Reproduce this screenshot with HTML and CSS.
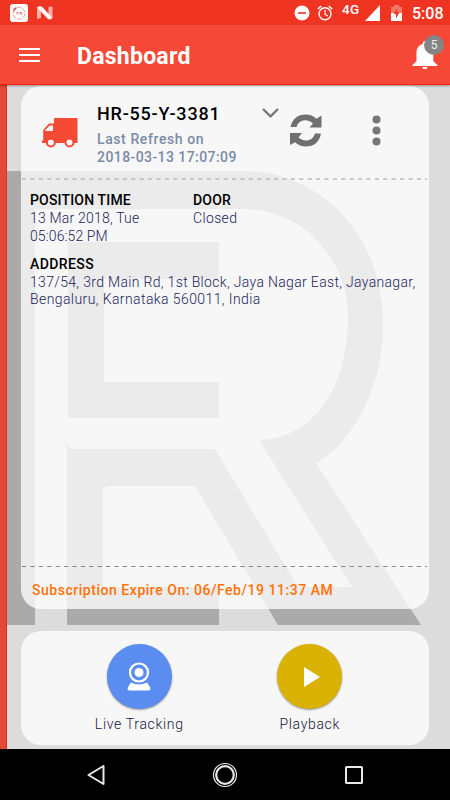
FILE: index.html
```html
<!DOCTYPE html>
<html lang="en">
<head>
<meta charset="utf-8">
<title>Dashboard</title>
<link rel="stylesheet" href="styles.css">
</head>
<body>
<div class="phone">
  <div class="status">
    <svg class="s-app" width="18" height="18" viewBox="0 0 18 18"><rect width="18" height="18" rx="3" fill="#fff"/><circle cx="9" cy="9.3" r="5.9" fill="none" stroke="#eba098" stroke-width="1" stroke-dasharray="5 1"/><path d="M3.500 6.500 6 3.800" stroke="#d33" stroke-width="1.300"/><path d="M7 10.500V8.500h1.800M10 10.500V8.500h1.600v2" stroke="#d66" stroke-width=".9" fill="none"/></svg>
    <svg class="s-n" width="16" height="14" viewBox="0 0 16 14"><path d="M0 1.500 4 4.500V12L0 13zM11.500 1 15.500 .5V12l-4-3z" fill="#ffb0a8"/><path d="M0 1.500Q2.500-.7 5 .8L15.500 12Q13 14.500 10.500 12.500z" fill="#fff"/></svg>
    <span class="grow"></span>
    <svg class="s-dnd" width="16" height="16" viewBox="0 0 16 16"><circle cx="8" cy="8" r="7.500" fill="#fff"/><path d="M4 8h8" stroke="#f03422" stroke-width="1.600"/></svg>
    <svg class="s-alarm" width="16" height="16" viewBox="0 0 16 16" fill="none" stroke="#fff"><circle cx="8" cy="8.800" r="6" stroke-width="1.400"/><path d="M.8 4 4.200 1.200M15.200 4 11.800 1.200" stroke-width="1.500"/><path d="M8 5v4.200l2.800 1.700" stroke-width="1.200"/></svg>
    <span class="net">4G</span>
    <svg class="s-sig" width="15" height="16" viewBox="0 0 15 16"><path d="M15 0v16H0z" fill="#fff"/></svg>
    <svg class="s-bat" width="11" height="16" viewBox="0 0 11 16"><path d="M0 2h3V0h5v2h3v6H0z" fill="#f6766a"/><path d="M0 8h11v8H0z" fill="#fff"/><path d="M6.300 3.500 2.500 9H5v4.500L8.500 7.500H6.300z" fill="#f03422"/></svg>
    <span class="clock">5:08</span>
  </div>
  <header class="appbar">
    <svg class="burger" width="21" height="14" viewBox="0 0 21 14"><path d="M0 1h21M0 7h21M0 13h21" stroke="#fff" stroke-width="2"/></svg>
    <h1 class="title">Dashboard</h1>
    <div class="bell">
      <svg width="26" height="29" viewBox="0 0 26 29"><path d="M10.800 3V2a2 2 0 0 1 4 0v1c4 1 6.500 4.500 6.500 8.500V20l4.200 4.300v.7H.3v-.7L4.500 20v-8.500C4.500 7.500 6.800 4 10.800 3zM10.200 26h5.300a2.700 2.700 0 0 1-5.300 0z" fill="#fff"/></svg>
      <span class="badge">5</span>
    </div>
  </header>
  <main class="content">
    <svg class="mark" width="443" height="664" viewBox="7 85 443 664">
      <g fill="#aaa">
        <path d="M7 171H245C310 171 383 225 383 325C383 394 347 447 316 463L421 625H278L195 486H106L103 489V587H219V625H67V449H215L298 587H352L259 440C315 438 348 387 348 315C348 264 306 209 245 209H35V625H7z"/>
        <path d="M68 242H219V279H104V382H219V418H68zM64 441 70 449H67z"/>
      </g>
    </svg>
    <section class="card vehicle">
      <div class="head">
        <svg class="truck" width="36" height="30" viewBox="0 0 36 30"><path d="M12 0h23.500v25h-3.200a5 5 0 0 0-9.700 0H13.600a5 5 0 0 0-9.500 0H0v-2.500h1.200V12L7 5.500h5z" fill="#f54a35"/><path d="M7.700 7.500H11V13H3.200v-.8z" fill="#f6f6f6"/><circle cx="8.900" cy="24.500" r="4" fill="none" stroke="#f54a35" stroke-width="2"/><circle cx="27.500" cy="24.500" r="4" fill="none" stroke="#f54a35" stroke-width="2"/></svg>
        <div class="ident">
          <div class="plate">HR-55-Y-3381</div>
          <div class="refresh"><span class="r1">Last Refresh on</span><br><span class="r2">2018-03-13 17:07:09</span></div>
        </div>
        <svg class="chev" width="17" height="10" viewBox="0 0 17 10"><path d="M1 1l7.500 7.300L16 1" fill="none" stroke="#777" stroke-width="2.400"/></svg>
        <svg class="sync" width="32" height="33" viewBox="0 0 32 33"><g fill="#707070"><path d="M.5 13C2 5 8 .5 15.500 .5c4.500 0 8 1.500 11 4.300L31.500 1.500V13.500H19.500L23 9.500C17 4 8.500 6 6.500 13z"/><path d="M31 19.500C29.500 28 24 32.500 16 32.500c-4.500 0-8-1.600-11-4.300L0 31V19H12L8.500 23.500c6.500 5.500 14.500 3 16.500-4z"/></g></svg>
        <svg class="dots" width="9" height="31" viewBox="0 0 9 31" fill="#777"><circle cx="4.500" cy="4.500" r="4"/><circle cx="4.500" cy="15.500" r="4"/><circle cx="4.500" cy="26.500" r="4"/></svg>
      </div>
      <svg class="dash" width="405" height="2" viewBox="0 0 405 2"><path d="M0 1h405" stroke="#bbb" stroke-width="1.600" stroke-dasharray="4.200 4.200"/></svg>
      <div class="info">
        <div class="row">
          <div class="col-a"><div class="label l1">POSITION TIME</div><div class="value"><span class="v1">13 Mar 2018, Tue</span><br><span class="v2">05:06:52 PM</span></div></div>
          <div><div class="label l2">DOOR</div><div class="value v3">Closed</div></div>
        </div>
        <div class="address"><div class="label l3">ADDRESS</div><div class="value"><span class="v4">137/54, 3rd Main Rd, 1st Block, Jaya Nagar East, Jayanagar,</span><br><span class="v5">Bengaluru, Karnataka 560011, India</span></div></div>
      </div>
      <svg class="dash" width="405" height="2" viewBox="0 0 405 2"><path d="M0 1.500h405" stroke="#858585" stroke-width="1" stroke-dasharray="4.200 4.200"/></svg>
      <div class="expire">Subscription Expire On: 06/Feb/19 11:37 AM</div>
    </section>
    <section class="card actions">
      <div class="action">
        <div class="disc blue"><svg width="24" height="30" viewBox="0 0 24 30"><circle cx="12" cy="10.500" r="9" fill="none" stroke="#fff" stroke-width="2.200"/><circle cx="12" cy="10.500" r="4.500" fill="#fff"/><path d="M4 20.500q8 4.200 16 0l3.300 5q.7 3-2 3H2.700q-2.700 0-2-3z" fill="#fff"/></svg></div>
        <span>Live Tracking</span>
      </div>
      <div class="action">
        <div class="disc gold"><svg class="play" width="16" height="20" viewBox="0 0 16 20"><path d="M0 0v20l16-10z" fill="#fff"/></svg></div>
        <span>Playback</span>
      </div>
    </section>
  </main>
  <nav class="nav">
    <svg width="18" height="20" viewBox="0 0 18 20"><path d="M16.500 1v18L1.500 10z" fill="none" stroke="#e8e8e8" stroke-width="2" stroke-linejoin="round"/></svg>
    <svg width="26" height="26" viewBox="0 0 26 26" fill="none" stroke="#e8e8e8"><circle cx="13" cy="13" r="11.500" stroke-width="1.200"/><circle cx="13" cy="13" r="8.800" stroke-width="2.200"/></svg>
    <svg width="18" height="18" viewBox="0 0 18 18"><rect x="1" y="1" width="16" height="16" rx=".5" fill="none" stroke="#e8e8e8" stroke-width="2"/></svg>
  </nav>
</div>
</body>
</html>
```

FILE: styles.css
```css
* { box-sizing: border-box; }
body { margin: 0; font-family: Roboto, "Liberation Sans", sans-serif; }
svg { display: block; flex: none; }
.phone { width: 450px; height: 800px; display: flex; flex-direction: column; overflow: hidden; }
.status { height: 25px; background: #f03422; display: flex; align-items: center; padding: 1px 7px 0 10px; color: #fff; }
.s-n { margin-left: 9px; }
.grow { flex: 1; }
.s-alarm { margin-left: 7px; }
.net { font-size: 13.5px; font-weight: 500; line-height: 14px; margin: -8px 0 0 9px; letter-spacing: .3px; width: 19px; white-space: nowrap; }
.s-sig { margin-left: 4px; }
.s-bat { margin-left: 11px; }
.clock { font-size: 16px; font-weight: 500; margin-left: 10px; line-height: 18px; padding-top: 2px; width: 31px; white-space: nowrap; }
.appbar { height: 60px; background: #f64836; border-bottom: 1px solid #f8220b; display: flex; align-items: center; padding: 0 12px 0 19px; box-shadow: 0 1px 2px rgba(0,0,0,.35); position: relative; z-index: 2; }
.title { margin: 4px 0 0 37px; color: #fff; font-size: 23px; font-weight: 700; line-height: 30px; flex: 1; letter-spacing: .25px; }
.bell { position: relative; margin-top: 1px; }
.badge { position: absolute; left: 12px; top: -6px; width: 20px; height: 20px; border-radius: 50%; background: #858585; color: #eee; font-size: 12px; line-height: 20px; text-align: center; }
.content { height: 664px; background: #dcdcdc; border-left: 6px solid #e04a36; position: relative; padding: 1px 21px 0 15px; box-shadow: inset 1px 0 #ef2a12; }
.mark { position: absolute; left: 1px; top: 0; }
.card { position: relative; width: 408px; background: rgba(255,255,255,.76); border-radius: 20px; }
.vehicle { height: 523px; display: flex; flex-direction: column; }
.head { height: 92px; display: flex; align-items: flex-start; padding-left: 21px; }
.truck { margin-top: 32px; }
.ident { margin: 17px 0 0 19px; width: 145px; white-space: nowrap; }
.plate { font-size: 18px; font-weight: 500; line-height: 22px; color: #000; letter-spacing: .78px; }
.refresh { margin-top: 5px; font-size: 14px; font-weight: 500; line-height: 18px; color: #7a8ba8; }
.r1 { letter-spacing: .6px; }
.r2 { letter-spacing: .42px; }
.chev { margin: 22px 0 0 20px; }
.sync { margin: 28px 0 0 11px; }
.dots { margin: 29px 0 0 50px; }
.dash { margin-left: 1px; }
.info { flex: 1; padding: 11px 0 0 9px; white-space: nowrap; }
.row { display: flex; }
.col-a { width: 163px; }
.label { font-size: 14px; font-weight: 500; line-height: 18px; color: #000; }
.l1 { letter-spacing: .17px; }
.l2 { letter-spacing: .2px; }
.l3 { letter-spacing: .4px; }
.value { margin-top: 1px; font-size: 14px; font-weight: 300; line-height: 17.500px; color: #1c1c5c; }
.v1 { letter-spacing: .2px; }
.v2 { letter-spacing: .1px; }
.v3 { letter-spacing: .35px; }
.v4 { letter-spacing: .33px; }
.v5 { letter-spacing: .41px; }
.address { margin-top: 9.5px; }
.expire { height: 42px; padding: 14px 0 0 11px; font-size: 14px; line-height: 18px; font-weight: 500; color: #ff7207; white-space: nowrap; letter-spacing: .53px; }
.actions { height: 114px; margin-top: 22px; display: flex; padding: 13px 33px 0 33px; }
.action { width: 170.500px; display: flex; flex-direction: column; align-items: center; font-size: 14px; font-weight: 300; line-height: 18px; color: #15153c; white-space: nowrap; gap: 6px; letter-spacing: .67px; }
.disc { width: 65px; height: 65px; border-radius: 50%; display: flex; align-items: center; justify-content: center; box-shadow: 0 1px 2px rgba(0,0,0,.4); }
.blue { background: #5b8df0; }
.gold { background: #d9b204; }
.play { margin-left: 5px; }
.nav { height: 51px; background: #000; display: flex; align-items: center; justify-content: space-between; padding: 0 87px; }
```
